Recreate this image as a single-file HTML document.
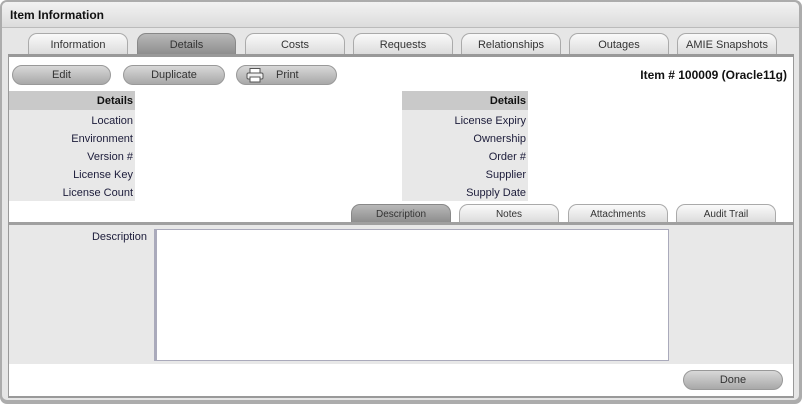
<!DOCTYPE html>
<html><head><meta charset="utf-8"><style>
*{margin:0;padding:0;box-sizing:border-box}
body{width:802px;height:406px;background:#fff;font-family:"Liberation Sans",Arial,sans-serif;font-size:11px;position:relative;overflow:hidden}
.a{position:absolute}
.tab{position:absolute;height:21px;border:1px solid #aaa;border-bottom:none;border-radius:9px 9px 0 0;background:linear-gradient(#fafafa,#dcdcdc);text-align:center;line-height:23px;color:#333;font-size:11px}
.tab.on{background:linear-gradient(#b8b8b8,#8e8e8e);border-color:#888}
.btn{position:absolute;height:20px;border-radius:10px;background:linear-gradient(#d8d8d8,#a8a8a8);border:1px solid #999;text-align:center;line-height:19px;color:#333;font-size:11px}
.lbl{position:absolute;text-align:right;color:#1c1c3a;font-size:11px;padding-right:2px}
</style></head><body>
<div class="a" style="left:0;top:0;width:802px;height:404px;background:#acacac;border-radius:7px"></div>
<div class="a" style="left:2px;top:2px;width:797px;height:398px;background:#e6e6e6;border-radius:5px"></div>
<div class="a" style="left:2px;top:2px;width:797px;height:26px;background:linear-gradient(#f2f2f2,#dcdcdc);border-bottom:1px solid #bbb;border-radius:5px 5px 0 0"></div>
<div class="a" style="left:10px;top:8px;font-weight:bold;font-size:12px;color:#111">Item Information</div>
<div class="tab" style="left:28px;top:33px;width:100px">Information</div>
<div class="tab on" style="left:137px;top:33px;width:99px">Details</div>
<div class="tab" style="left:245px;top:33px;width:100px">Costs</div>
<div class="tab" style="left:353px;top:33px;width:100px">Requests</div>
<div class="tab" style="left:461px;top:33px;width:100px">Relationships</div>
<div class="tab" style="left:569px;top:33px;width:100px">Outages</div>
<div class="tab" style="left:677px;top:33px;width:100px">AMIE Snapshots</div>
<div class="a" style="left:8px;top:54px;width:786px;height:344px;background:#999"></div>
<div class="a" style="left:9px;top:57px;width:784px;height:339px;background:#fff"></div>
<div class="btn" style="left:12px;top:65px;width:99px">Edit</div>
<div class="btn" style="left:123px;top:65px;width:102px">Duplicate</div>
<div class="btn" style="left:236px;top:65px;width:101px;padding-left:0">
<svg class="a" style="left:9px;top:2px" width="18" height="15" viewBox="0 0 18 15"><rect x="4" y="0.5" width="10" height="5" fill="#fff" stroke="#555"/><rect x="1" y="5" width="16" height="6" rx="1.5" fill="#eee" stroke="#555"/><rect x="4" y="9" width="10" height="5" fill="#fff" stroke="#555"/></svg>
<span style="position:absolute;left:39px">Print</span></div>
<div class="a" style="right:15px;top:68px;font-weight:bold;font-size:12px;color:#111">Item # 100009 (Oracle11g)</div>
<div class="a" style="left:9px;top:91px;width:126px;height:110px;background:#e8e8e8"></div>
<div class="a" style="left:9px;top:91px;width:126px;height:19px;background:#c9c9c9"></div>
<div class="lbl" style="left:9px;top:95px;width:126px;font-weight:bold;color:#111">Details</div>
<div class="lbl" style="left:9px;top:115px;width:126px">Location</div>
<div class="lbl" style="left:9px;top:133px;width:126px">Environment</div>
<div class="lbl" style="left:9px;top:151px;width:126px">Version #</div>
<div class="lbl" style="left:9px;top:169px;width:126px">License Key</div>
<div class="lbl" style="left:9px;top:187px;width:126px">License Count</div>
<div class="a" style="left:402px;top:91px;width:126px;height:110px;background:#e8e8e8"></div>
<div class="a" style="left:402px;top:91px;width:126px;height:19px;background:#c9c9c9"></div>
<div class="lbl" style="left:402px;top:95px;width:126px;font-weight:bold;color:#111">Details</div>
<div class="lbl" style="left:402px;top:115px;width:126px">License Expiry</div>
<div class="lbl" style="left:402px;top:133px;width:126px">Ownership</div>
<div class="lbl" style="left:402px;top:151px;width:126px">Order #</div>
<div class="lbl" style="left:402px;top:169px;width:126px">Supplier</div>
<div class="lbl" style="left:402px;top:187px;width:126px">Supply Date</div>
<div class="tab on" style="left:351px;top:204px;width:100px;height:18px;line-height:20px;font-size:10px">Description</div>
<div class="tab" style="left:459px;top:204px;width:100px;height:18px;line-height:20px;font-size:10px">Notes</div>
<div class="tab" style="left:568px;top:204px;width:100px;height:18px;line-height:20px;font-size:10px">Attachments</div>
<div class="tab" style="left:676px;top:204px;width:100px;height:18px;line-height:20px;font-size:10px">Audit Trail</div>
<div class="a" style="left:9px;top:222px;width:784px;height:3px;background:#a0a0a0"></div>
<div class="a" style="left:9px;top:225px;width:784px;height:139px;background:#e8e8e8"></div>
<div class="lbl" style="left:9px;top:231px;width:140px">Description</div>
<div class="a" style="left:154px;top:229px;width:515px;height:132px;background:#fff;border:1px solid #aab;border-left:3px solid #aab"></div>
<div class="btn" style="left:683px;top:370px;width:100px">Done</div>
</body></html>
